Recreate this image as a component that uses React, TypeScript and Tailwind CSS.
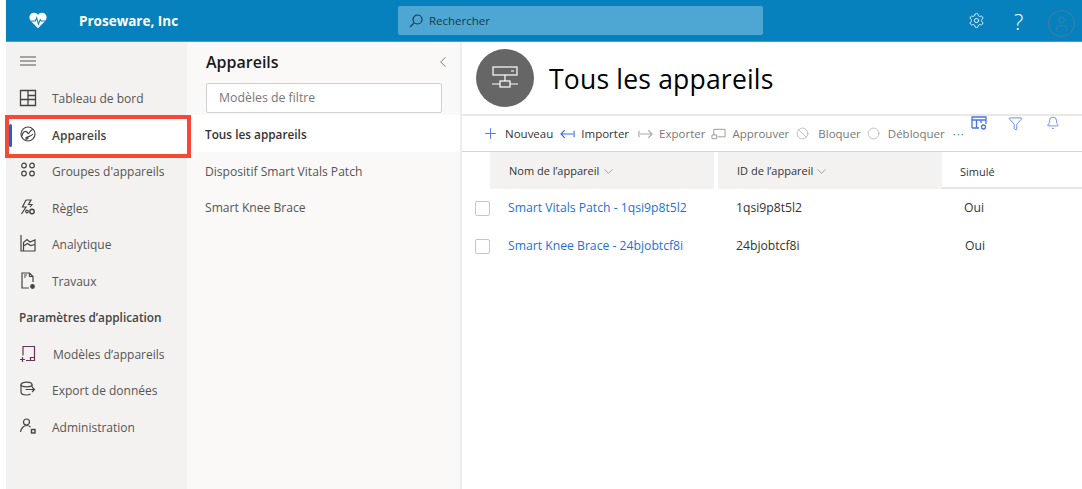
import { ChevronDown, ChevronLeft, Plus, Settings, Filter, Bell, Ban, Circle, User } from 'lucide-react';

const FONT = "font-['Open_Sans','Noto_Sans',sans-serif]";

function Heart() {
  return (
    <svg width="18" height="17" viewBox="0 0 20 18">
      <path d="M10 17.5 L2 9.5 C-1.500 5 1.500 0.5 5.500 0.5 C7.500 0.5 9 1.500 10 3 C11 1.500 12.500 0.500 14.500 0.500 C18.500 0.500 21.500 5 18 9.500 Z" fill="#fff" />
      <path d="M2 9.5 H7 L8.500 6 L10.500 13 L12.500 8 L13.500 9.5 H18" fill="none" stroke="#0681bd" strokeWidth="1.200" />
    </svg>
  );
}

function Icon({ children }: { children: React.ReactNode }) {
  return (
    <svg width="18" height="18" viewBox="0 0 18 18" fill="none" stroke="#444" strokeWidth="1.200">
      {children}
    </svg>
  );
}

const navTop = [
  {
    label: 'Tableau de bord',
    icon: <path d="M1.500 1.500H16.500V16.500H1.500ZM1.500 10.500H16.500M9 1.500V16.500M9 6.500H16.500" strokeWidth="1.300" />,
  },
  {
    label: 'Appareils',
    active: true,
    icon: (
      <>
        <circle cx="9" cy="8" r="7" />
        <path d="M3 10C3.500 5.500 6.500 4.500 8 6C9 7 8.500 8 9.500 7.500C10.500 7 11 4.500 13.500 3.500" />
        <path d="M6.500 13.500C8 13.500 8 11 9.500 10.500C11.500 10 12.500 10 14 8" />
        <circle cx="8" cy="12" r="1" />
      </>
    ),
  },
  {
    label: "Groupes d'appareils",
    icon: (
      <>
        <circle cx="5" cy="3.500" r="2.300" />
        <circle cx="13" cy="3.500" r="2.300" />
        <circle cx="5" cy="11.500" r="2.300" />
        <circle cx="13" cy="11.500" r="2.300" />
      </>
    ),
  },
  {
    label: 'Règles',
    icon: (
      <>
        <path d="M7 1L3.500 8H7L2.500 15M7 1H12L9.500 5.500H13L11 8" />
        <circle cx="13" cy="12.500" r="2.200" strokeWidth="1.400" />
        <circle cx="8" cy="12.500" r="1.300" />
      </>
    ),
  },
  {
    label: 'Analytique',
    icon: (
      <path d="M2 0V16H16.500M4.500 16V7.500L8 4.500L11 7L16 5V16M4.500 11L8.500 8.500L11.500 10.500L16 9.500" />
    ),
  },
  {
    label: 'Travaux',
    icon: (
      <>
        <path d="M3 5V16H10M3 5V1H10.500L14 4.500V10" />
        <path d="M5 3H8M5 5H7M10.500 1V4.500H14" />
        <circle cx="13.500" cy="14.500" r="1.800" fill="#444" />
      </>
    ),
  },
];

const navBottom = [
  {
    label: 'Modèles d’appareils',
    indent: true,
    icon: (
      <path d="M4 10.500V1.500H15.500V15.500H7M1 14.500H6M3.500 12V17M11.500 15.500V12.500H15.500" stroke="#6a3358" />
    ),
  },
  {
    label: 'Export de données',
    icon: (
      <>
        <ellipse cx="7.500" cy="3.500" rx="5.500" ry="2.300" />
        <path d="M2 3.500V11C2 13 5 14 7.500 14C9 14 10.500 13.700 11.500 13M13 3.500V6M6.500 8.500H15.500M13 6L15.500 8.500L13 11" />
      </>
    ),
  },
  {
    label: 'Administration',
    icon: (
      <>
        <circle cx="7.500" cy="4" r="3" />
        <path d="M1.500 14C2 10 5 7.500 7.500 7.500C9 7.500 10.500 8 11.500 9" />
        <rect x="12.500" y="11.500" width="3.500" height="3.500" strokeWidth="1.400" />
      </>
    ),
  },
];

type NavItem = { label: string; icon: React.ReactNode; active?: boolean; indent?: boolean };

function NavRow({ item }: { item: NavItem }) {
  return (
    <div
      className={`relative flex h-[36.5px] items-center pl-[13px] text-[12px] ${
        item.active ? 'bg-white font-semibold text-[#444]' : 'text-[#555]'
      }`}
    >
      {item.active && <div className="absolute left-[3px] top-[6px] h-[23px] w-[3px] rounded bg-[#1464f0]" />}
      <span className="-mt-[2px] w-[33px] shrink-0">
        <Icon>{item.icon}</Icon>
      </span>
      <span className={item.indent ? 'pl-px' : ''}>{item.label}</span>
    </div>
  );
}

function ToolButton({ icon, label, enabled }: { icon: React.ReactNode; label: string; enabled?: boolean }) {
  return (
    <div className={`flex items-center gap-[6px] ${enabled ? 'text-[#333]' : 'text-[#777]'}`}>
      {icon}
      <span>{label}</span>
    </div>
  );
}

function Arrow({ flip, color }: { flip?: boolean; color: string }) {
  return (
    <svg width="15" height="10" viewBox="0 0 16 10" fill="none" stroke={color} strokeWidth="1.200" className={flip ? 'rotate-180' : ''}>
      <path d="M1 5H14M5 1L1 5L5 9M15 1.500V8.500" />
    </svg>
  );
}

function Checkbox() {
  return <div className="h-[15px] w-[15px] rounded-[2px] border border-[#c8c6c4] bg-white" />;
}

export default function App() {
  return (
    <div className={`relative flex h-[489px] w-[1082px] flex-col overflow-hidden bg-white pl-[6px] ${FONT}`}>
      {/* Top bar */}
      <header className="flex h-[42px] shrink-0 items-center border-b border-[#3f9fd0] bg-[#0681bd] text-white">
        <div className="flex w-[392px] shrink-0 items-center pl-[23px]">
          <Heart />
          <span className="ml-[32px] mt-[2px] text-[13.5px] font-bold">Proseware, Inc</span>
        </div>
        <div className="flex h-[29px] w-[365px] items-center gap-[6px] rounded-[2px] bg-[#4ea7d2] pl-[11px] text-[11.5px] text-[#17384a]">
          <svg width="14" height="14" viewBox="0 0 14 14" fill="none" stroke="#17384a" strokeWidth="1.200">
            <circle cx="8.500" cy="5.500" r="4.500" />
            <path d="M5.200 8.800L1 13" />
          </svg>
          <span className="mt-px">Rechercher</span>
        </div>
        <div className="ml-[205px] flex items-center">
          <Settings size={17} strokeWidth={1.200} />
          <span className="ml-[29px] text-[22px] font-light leading-none">?</span>
          <div className="ml-[25px] mt-[5px] flex h-[27px] w-[27px] items-center justify-center rounded-full border border-[#4a7f9c] text-[#4a7f9c]">
            <User size={17} strokeWidth={1.200} />
          </div>
        </div>
      </header>

      <div className="flex min-h-0 flex-1">
        {/* Left nav */}
        <nav className="w-[181px] shrink-0 bg-[#f3f2f1]">
          <div className="flex h-[39px] items-center pb-[2px] pl-[14px]">
            <svg width="16" height="10" viewBox="0 0 16 10" stroke="#555" strokeWidth="1.100">
              <path d="M0 1H16M0 5H16M0 9H16" />
            </svg>
          </div>
          {navTop.map((item) => (
            <NavRow key={item.label} item={item} />
          ))}
          <div className="flex h-[36.5px] items-center pl-[13px] text-[11.8px] font-semibold text-[#444]">
            Paramètres d’application
          </div>
          {navBottom.map((item) => (
            <NavRow key={item.label} item={item} />
          ))}
        </nav>

        {/* Secondary panel */}
        <aside className="w-[275px] shrink-0 border-r-2 border-[#eeeeee] bg-[#faf9f8]">
          <div className="flex h-[41px] items-center justify-between pb-[2px] pl-[19px] pr-[8px]">
            <span className="text-[16px] font-semibold text-[#1a1a1a]">Appareils</span>
            <ChevronLeft size={18} strokeWidth={1} className="text-[#555]" />
          </div>
          <div className="ml-[19px] mr-[18px] flex h-[30px] items-center rounded-[2px] border border-[#d0d0d0] bg-white pl-[12px] text-[12.3px] text-[#777]">
            Modèles de filtre
          </div>
          <div className="mt-[2px] flex h-[37px] items-center bg-white pl-[18px] pt-[2px] text-[11.8px] font-semibold text-[#333]">
            Tous les appareils
          </div>
          <div className="mt-[2px] flex h-[36px] items-center pl-[18px] text-[12.1px] text-[#555]">Dispositif Smart Vitals Patch</div>
          <div className="flex h-[36px] items-center pl-[18px] text-[12.1px] text-[#555]">Smart Knee Brace</div>
        </aside>

        {/* Main */}
        <main className="min-w-0 flex-1">
          <div className="flex h-[74px] items-center border-b-2 border-[#e8e8e8] pl-[14px]">
            <div className="flex h-[58px] w-[58px] items-center justify-center rounded-full bg-[#666666]">
              <svg width="26" height="24" viewBox="0 0 26 24" fill="none" stroke="#fff" strokeWidth="1.200">
                <rect x="1" y="1" width="24" height="8" />
                <path d="M19 5H22M13 9V15M0 18H8M18 18H26" />
                <rect x="8" y="15" width="10" height="6" />
              </svg>
            </div>
            <h1 className="ml-[15px] mt-[4px] text-[26.5px] font-normal tracking-[0.2px] text-black">Tous les appareils</h1>
          </div>

          <div className="relative flex h-[36px] items-center border-b border-[#d6d6d6] pl-[20px] text-[11.5px]">
            <ToolButton enabled label="Nouveau" icon={<Plus size={17} strokeWidth={1.300} className="text-[#4a72e8]" />} />
            <div className="ml-[7px]">
              <ToolButton enabled label="Importer" icon={<Arrow color="#3f6fe0" />} />
            </div>
            <div className="ml-[9px]">
              <ToolButton label="Exporter" icon={<Arrow flip color="#aaa" />} />
            </div>
            <div className="ml-[6px]">
              <ToolButton
                label="Approuver"
                icon={
                  <svg width="15" height="12" viewBox="0 0 16 12" fill="none" stroke="#999">
                    <path d="M3 7V1H15V9H7M1 7H6V11H1Z" />
                  </svg>
                }
              />
            </div>
            <div className="ml-[7px]">
              <ToolButton label="Bloquer" icon={<Ban size={13} strokeWidth={1.100} className="mr-[3px] text-[#999]" />} />
            </div>
            <div className="ml-[6px]">
              <ToolButton label="Débloquer" icon={<Circle size={13} strokeWidth={1.100} className="mr-[2px] text-[#999]" />} />
            </div>
            <span className="ml-[8px] tracking-[1px] text-[#4a72e8]">···</span>
            {/* Icons sitting on the toolbar's top edge */}
            <div className="absolute left-[509px] top-0 flex items-start gap-[21px] text-[#4a72e8]">
              <svg width="16" height="14" viewBox="0 0 16 14" fill="none" stroke="currentColor" strokeWidth="1.300">
                <path d="M1 12V1H15V8M1 4H15M1 12H8M5.500 4V12M10 4V7" />
                <circle cx="12.500" cy="11" r="2" />
              </svg>
              <Filter size={15} strokeWidth={1.300} />
              <Bell size={14} strokeWidth={1.300} className="ml-[2px]" />
            </div>
          </div>

          <div className="flex h-[37px] text-[11px] text-[#333]">
            <div className="w-[28px] shrink-0" />
            <div className="flex w-[224px] items-center gap-[2px] bg-[#f3f2f1] pl-[19px] pt-[1px]">
              Nom de l’appareil <ChevronDown size={15} strokeWidth={0.900} className="text-[#666]" />
            </div>
            <div className="ml-[4px] flex w-[224px] items-center gap-[1px] bg-[#f3f2f1] pl-[19px] pt-[1px]">
              ID de l’appareil <ChevronDown size={15} strokeWidth={0.900} className="text-[#666]" />
            </div>
            <div className="flex flex-1 items-center border-b-2 border-[#e5e5e5] pl-[18px] pt-[5px]">Simulé</div>
          </div>

          {[
            { name: 'Smart Vitals Patch - 1qsi9p8t5l2', id: '1qsi9p8t5l2', oui: 'pl-0' },
            { name: 'Smart Knee Brace - 24bjobtcf8i', id: '24bjobtcf8i', oui: 'pl-px' },
          ].map((row) => (
            <div key={row.id} className="flex h-[38px] items-center text-[12.2px] text-[#333] first:mt-px">
              <div className="w-[46px] shrink-0 pl-[13px]">
                <Checkbox />
              </div>
              <div className="w-[228px] shrink-0 text-[#1a73d8]">{row.name}</div>
              <div className="w-[228px] shrink-0">{row.id}</div>
              <div className={row.oui}>Oui</div>
            </div>
          ))}
        </main>
      </div>

      {/* Red highlight drawn over the screenshot */}
      <div className="absolute left-[5px] top-[115px] h-[43px] w-[186px] border-[4px] border-[#f44a33]" />
    </div>
  );
}
